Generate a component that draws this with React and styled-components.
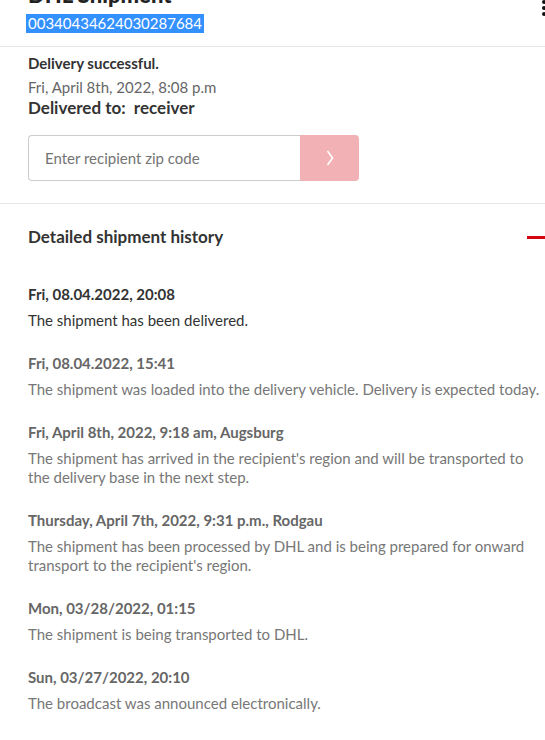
import React from "react";
import styled, { createGlobalStyle } from "styled-components";

const events = [
  {
    date: "Fri, 08.04.2022, 20:08",
    text: "The shipment has been delivered.",
    latest: true
  },
  {
    date: "Fri, 08.04.2022, 15:41",
    text: "The shipment was loaded into the delivery vehicle. Delivery is expected today."
  },
  {
    date: "Fri, April 8th, 2022, 9:18 am, Augsburg",
    text: "The shipment has arrived in the recipient's region and will be transported to the delivery base in the next step."
  },
  {
    date: "Thursday, April 7th, 2022, 9:31 p.m., Rodgau",
    text: "The shipment has been processed by DHL and is being prepared for onward transport to the recipient's region."
  },
  {
    date: "Mon, 03/28/2022, 01:15",
    text: "The shipment is being transported to DHL."
  },
  {
    date: "Sun, 03/27/2022, 20:10",
    text: "The broadcast was announced electronically."
  }
];

const font = `Lato, "Noto Sans", "Liberation Sans", sans-serif`;

const GlobalStyle = createGlobalStyle`
  html, body {
    margin: 0;
    padding: 0;
    background: #fff;
    overflow: hidden;
  }
  body {
    font-family: ${font};
    color: #333;
  }
`;

const Page = styled.div`
  width: 545px;
  margin-top: -18px;
`;
const Header = styled.div`
  display: flex;
  justify-content: space-between;
  align-items: flex-start;
  padding: 0 0 13px 28px;
  border-bottom: 1px solid #e6e6e6;
`;
const Title = styled.h1`
  margin: 0;
  font-size: 22px;
  line-height: 26px;
  font-weight: 900;
  color: #222;
`;
const Tracking = styled.div`
  display: inline-block;
  margin: 6px 0 0 -2px;
  padding: 0 2px;
  background: #3390ff;
  color: #fff;
  font-size: 15px;
  line-height: 19px;
`;
const Kebab = styled.div`
  display: flex;
  flex-direction: column;
  gap: 2px;
  margin: 18px -1px 0 0;
  span {
    width: 4px;
    height: 4px;
    border-radius: 50%;
    background: #111;
  }
`;
const Status = styled.div`
  padding: 6px 28px 22px;
  border-bottom: 1px solid #e6e6e6;
`;
const StatusTitle = styled.div`
  font-size: 15px;
  line-height: 20px;
  font-weight: 700;
  color: #333;
`;
const StatusDate = styled.div`
  margin-top: 4px;
  font-size: 15px;
  line-height: 20px;
  color: #666;
`;
const DeliveredTo = styled.div`
  font-size: 17px;
  line-height: 22px;
  font-weight: 700;
  color: #333;
`;
const ZipForm = styled.div`
  display: flex;
  width: 331px;
  height: 46px;
  margin-top: 16px;
`;
const ZipInput = styled.input`
  flex: 1;
  min-width: 0;
  box-sizing: border-box;
  height: 100%;
  border: 1px solid #cccccc;
  border-right: none;
  border-radius: 4px 0 0 4px;
  padding: 0 16px;
  font-family: ${font};
  font-size: 15px;
  color: #333;
  outline: none;
  &::placeholder {
    color: #747474;
  }
`;
const ZipButton = styled.button`
  width: 59px;
  height: 100%;
  border: none;
  border-radius: 0 4px 4px 0;
  background: #f2b1b5;
  display: flex;
  align-items: center;
  justify-content: center;
  padding: 0;
`;
const History = styled.div`
  padding: 22px 0 0 28px;
`;
const HistoryHead = styled.div`
  display: flex;
  justify-content: space-between;
  align-items: center;
`;
const HistoryTitle = styled.h2`
  margin: 0;
  font-size: 17px;
  line-height: 22px;
  font-weight: 700;
  color: #333;
`;
const Minus = styled.div`
  width: 18px;
  height: 3px;
  background: #d40511;
`;
const EventList = styled.div`
  display: flex;
  flex-direction: column;
  gap: 24px;
  margin-top: 37px;
  padding-right: 2px;
`;
const Event = styled.div`
  display: flex;
  flex-direction: column;
  gap: 7px;
`;
const EventDate = styled.div`
  font-size: 15px;
  line-height: 19px;
  font-weight: 700;
  color: ${p => (p.$latest ? "#333" : "#666")};
`;
const EventText = styled.div`
  font-size: 15px;
  line-height: 19px;
  color: ${p => (p.$latest ? "#333" : "#777")};
`;

const App = () => (
  <>
    <GlobalStyle />
    <Page>
      <Header>
        <div>
          <Title>DHL Shipment</Title>
          <Tracking>00340434624030287684</Tracking>
        </div>
        <Kebab>
          <span />
          <span />
          <span />
        </Kebab>
      </Header>

      <Status>
        <StatusTitle>Delivery successful.</StatusTitle>
        <StatusDate>Fri, April 8th, 2022, 8:08 p.m</StatusDate>
        <DeliveredTo>Delivered to:&nbsp; receiver</DeliveredTo>
        <ZipForm>
          <ZipInput placeholder="Enter recipient zip code" />
          <ZipButton type="button" aria-label="submit">
            <svg width="10" height="18" viewBox="0 0 10 18">
              <path d="M2.5 2 L7.5 9 L2.5 16" fill="none" stroke="#fff" strokeWidth="1.6" />
            </svg>
          </ZipButton>
        </ZipForm>
      </Status>

      <History>
        <HistoryHead>
          <HistoryTitle>Detailed shipment history</HistoryTitle>
          <Minus />
        </HistoryHead>
        <EventList>
          {events.map(ev => (
            <Event key={ev.date}>
              <EventDate $latest={ev.latest}>{ev.date}</EventDate>
              <EventText $latest={ev.latest}>{ev.text}</EventText>
            </Event>
          ))}
        </EventList>
      </History>
    </Page>
  </>
);

export default App;
